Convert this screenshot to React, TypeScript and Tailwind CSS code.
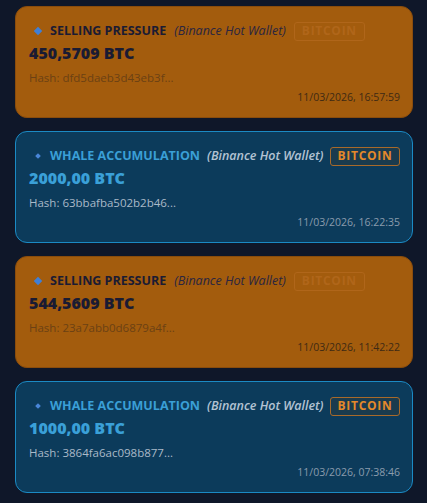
type Alert = {
  kind: 'sell' | 'whale'
  title: string
  amount: string
  hash: string
  time: string
}

const alerts: Alert[] = [
  { kind: 'sell', title: 'SELLING PRESSURE', amount: '450,5709 BTC', hash: 'dfd5daeb3d43eb3f', time: '11/03/2026, 16:57:59' },
  { kind: 'whale', title: 'WHALE ACCUMULATION', amount: '2000,00 BTC', hash: '63bbafba502b2b46', time: '11/03/2026, 16:22:35' },
  { kind: 'sell', title: 'SELLING PRESSURE', amount: '544,5609 BTC', hash: '23a7abb0d6879a4f', time: '11/03/2026, 11:42:22' },
  { kind: 'whale', title: 'WHALE ACCUMULATION', amount: '1000,00 BTC', hash: '3864fa6ac098b877', time: '11/03/2026, 07:38:46' },
]

function AlertCard({ alert }: { alert: Alert }) {
  const sell = alert.kind === 'sell'
  return (
    <div
      className={
        sell
          ? 'rounded-xl border border-[#8a4c0c] bg-[#a35c0d] pl-[13px] pr-[12px] pt-[14px] pb-[12px]'
          : 'rounded-xl border border-[#1b8ac4] bg-[#0c3b5b] pl-[13px] pr-[12px] pt-[14px] pb-[12px]'
      }
    >
      <div className="flex items-center h-[20px] whitespace-nowrap">
        <span className={sell ? 'shrink-0 w-[6px] h-[6px] rotate-45 bg-[#3f7fd6] ml-[6px] mr-[9px]' : 'shrink-0 w-[4px] h-[4px] rotate-45 bg-[#4a86d8] ml-[7px] mr-[10px]'} />
        <span className={sell ? 'text-[12.5px] font-bold text-[#1a1b33]' : 'text-[12.5px] font-bold text-[#3a9fd6]'}>
          {alert.title}
        </span>
        <span
          className={
            sell
              ? 'ml-[8px] text-[12.5px] italic text-[#2a2540]'
              : 'ml-[7px] text-[12.5px] italic font-semibold text-[#b3c3d3]'
          }
        >
          (Binance Hot Wallet)
        </span>
        <span
          className={
            sell
              ? 'ml-[8px] shrink-0 rounded-[3px] border border-[#b0661a] px-[7px] h-[19px] flex items-center text-[12px] font-bold tracking-[0.06em] text-[#b0661a]'
              : 'ml-[6px] shrink-0 rounded-[3px] border border-[#a86a2a] bg-[#3a3a33]/30 px-[7px] h-[19px] flex items-center text-[12px] font-bold tracking-[0.06em] text-[#e3892a]'
          }
        >
          BITCOIN
        </span>
      </div>
      <div className={sell ? 'mt-[1px] text-[16px] font-extrabold leading-[22px] text-[#1a1b33]' : 'mt-[1px] text-[16px] font-extrabold leading-[22px] text-[#3aa0d8]'}>
        {alert.amount}
      </div>
      <div className={sell ? 'mt-[6px] text-[11.5px] leading-[16px] text-[#6b4114]' : 'mt-[6px] text-[11.5px] leading-[16px] text-[#aab9c8]'}>
        Hash: {alert.hash}...
      </div>
      <div className={sell ? 'mt-[3px] text-right text-[10.5px] leading-[16px] text-[#3f2a14]' : 'mt-[3px] text-right text-[10.5px] leading-[16px] text-[#8a9cad]'}>
        {alert.time}
      </div>
    </div>
  )
}

export default function App() {
  return (
    <div className="min-h-[503px] bg-[#0f1729] px-[15px] pt-[6px] font-['Open_Sans',sans-serif]">
      <div className="w-[398px] flex flex-col gap-[13px]">
        {alerts.map((a, i) => (
          <AlertCard key={i} alert={a} />
        ))}
      </div>
    </div>
  )
}
